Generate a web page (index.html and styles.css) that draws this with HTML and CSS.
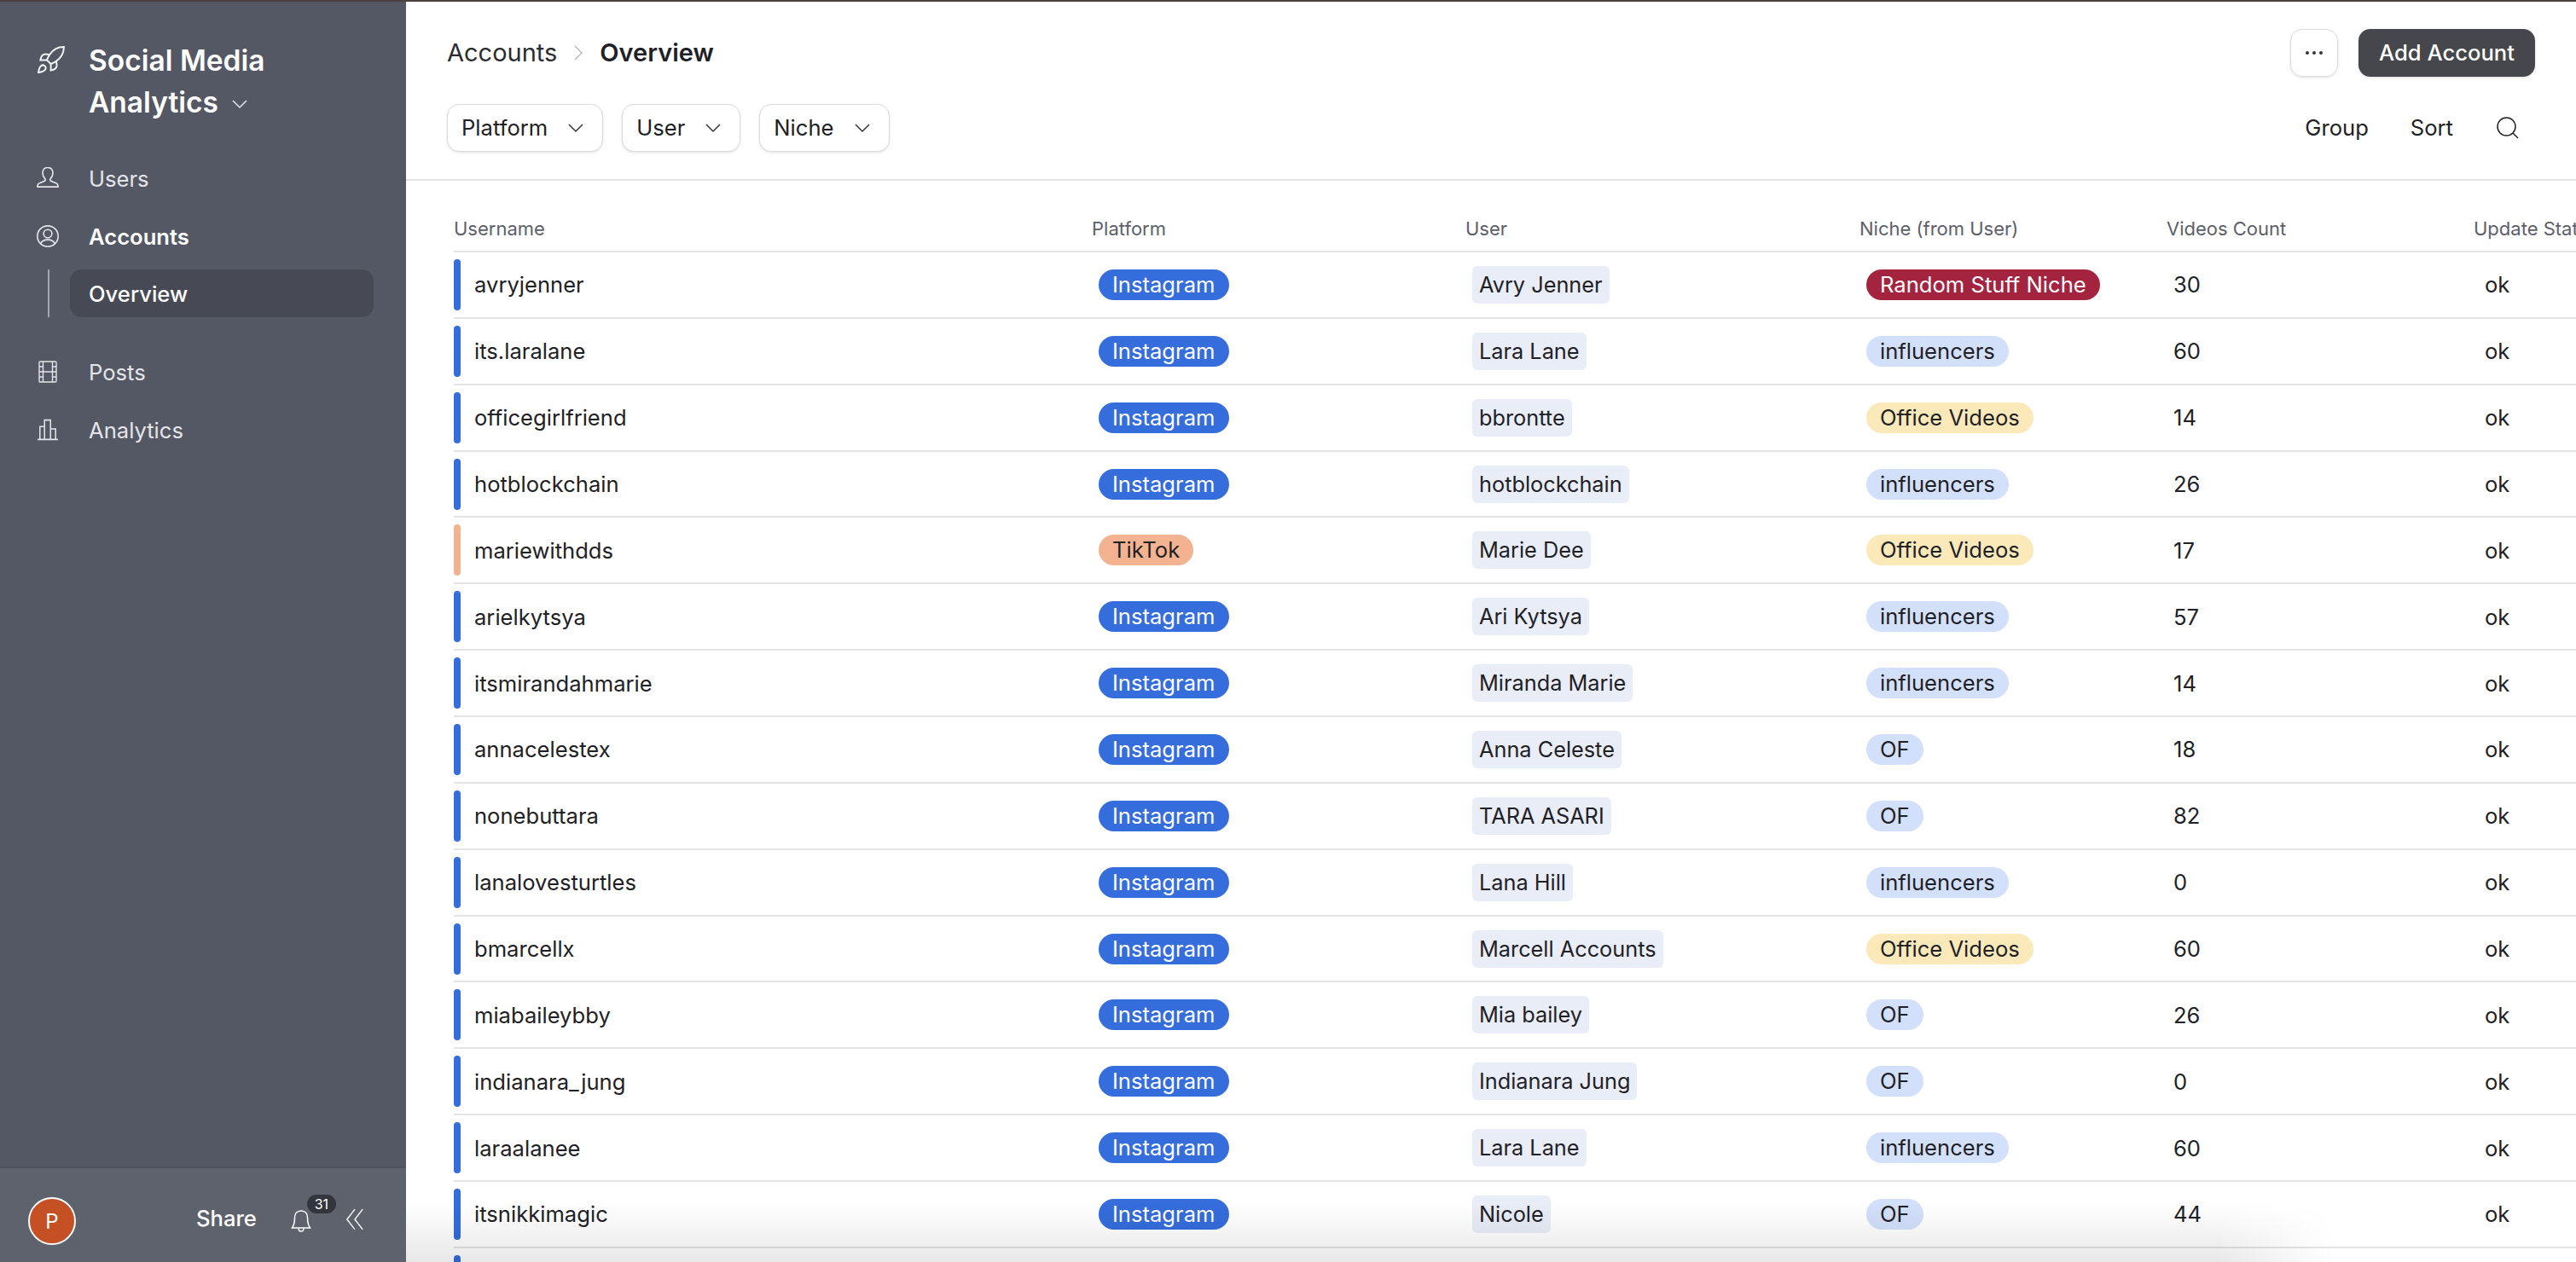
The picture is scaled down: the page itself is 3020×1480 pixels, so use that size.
FILE: index.html
```html
<!doctype html>
<html>
  <head>
    <title>Social Media Analytics - Accounts Overview</title>
    <link rel="stylesheet" href="styles.css">
  </head>
  <body>
    <div class="app">
      <div class="sidebar">
        <div class="brand">
          <svg class="rocket" viewBox="1.800 1.300 20.900 20.900"><path d="M4.500 16.500c-1.500 1.260-2 5-2 5s3.740-.5 5-2c.71-.84.7-2.130-.09-2.910a2.180 2.180 0 0 0-2.910-.09z"/><path d="M12 15l-3-3a22 22 0 0 1 2-3.950A12.880 12.880 0 0 1 22 2c0 2.720-.78 7.500-6 11a22.350 22.350 0 0 1-4 2z"/><path d="M9 12H4s.55-3.030 2-4c1.620-1.080 5 0 5 0"/><path d="M12 15v5s3.030-.55 4-2c1.080-1.620 0-5 0-5"/></svg>
          <div class="brand-name">Social Media<br>Analytics<svg class="brand-caret" viewBox="0 0 18 12"><path d="M1 2l8 8 8-8"/></svg></div>
        </div>
        <div class="nav">
          <div class="nav-item">
            <svg class="nav-icon" viewBox="1.170 1.170 21.670 21.670"><path d="M12 1.500c-3.200 0-5 2.400-5 5.400 0 2.400 1 4.200 2.200 5.400.5.500.5 1.600 0 2.300-.6.800-6.200 1.900-6.800 3.400-.3.800-.4 1.700-.4 2.500h20c0-.8-.1-1.700-.4-2.500-.6-1.500-6.200-2.600-6.800-3.400-.5-.7-.5-1.800 0-2.300 1.200-1.200 2.200-3 2.200-5.400 0-3-1.800-5.400-5-5.400z"/></svg>
            <span>Users</span>
          </div>
          <div class="nav-item nav-active">
            <svg class="nav-icon" viewBox="0.800 0.800 22.400 22.400"><circle cx="12" cy="12" r="10.500"/><circle cx="12" cy="9.500" r="4.200"/><path d="M4.800 19.500c1.500-3 4-4 7.200-4s5.700 1 7.200 4"/></svg>
            <span>Accounts</span>
          </div>
          <div class="sub-group">
            <div class="sub-line"></div>
            <div class="sub-item">Overview</div>
          </div>
          <div class="nav-item">
            <svg class="nav-icon" viewBox="0 0 26 26"><rect x="3" y="1" width="20" height="24" rx="1"/><path d="M7.500 1v24M18.500 1v24M3 7h4.500M3 13h20M3 19h4.500M18.500 7H23M18.500 19H23"/></svg>
            <span>Posts</span>
          </div>
          <div class="nav-item">
            <svg class="nav-icon" viewBox="0 0 24 24"><path d="M1 22.500h22M3.500 22.500v-14h5v14M8.500 22.500V1.500h6.500v21M15 11h5.500v11.500"/></svg>
            <span>Analytics</span>
          </div>
        </div>
        <div class="side-foot">
          <div class="avatar">P</div>
          <div class="share">Share</div>
          <div class="bell">
            <svg class="bell-icon" viewBox="0 0 24 28"><path d="M12 2c-5 0-7.500 3.500-7.500 8 0 6-1 9-3 12h21c-2-3-3-6-3-12 0-4.500-2.500-8-7.500-8z"/><path d="M9 22.500c0 2 1.300 3.500 3 3.500s3-1.500 3-3.500"/></svg>
            <div class="badge">31</div>
          </div>
          <svg class="collapse" viewBox="0 0 24 30"><path d="M12 2L2 15l10 13M22 2L12 15l10 13"/></svg>
        </div>
      </div>

      <div class="main">
        <div class="head">
          <div class="head-row">
            <div class="crumbs">
              <span>Accounts</span>
              <svg class="crumb-sep" viewBox="0 0 10 18"><path d="M1 1l8 8-8 8"/></svg>
              <span class="crumb-now">Overview</span>
            </div>
            <div class="actions">
              <div class="more-btn"><span class="dot"></span><span class="dot"></span><span class="dot"></span></div>
              <div class="add-btn">Add Account</div>
            </div>
          </div>
          <div class="head-row filter-row">
            <div class="filters">
              <div class="filter">Platform<svg class="caret" viewBox="0 0 18 12"><path d="M1 2l8 8 8-8"/></svg></div>
              <div class="filter">User<svg class="caret" viewBox="0 0 18 12"><path d="M1 2l8 8 8-8"/></svg></div>
              <div class="filter">Niche<svg class="caret" viewBox="0 0 18 12"><path d="M1 2l8 8 8-8"/></svg></div>
            </div>
            <div class="tools">
              <span>Group</span>
              <span>Sort</span>
              <svg class="search" viewBox="0 0 26 26"><circle cx="11.500" cy="11.500" r="10.500"/><path d="M19 19l6 6"/></svg>
            </div>
          </div>
        </div>

        <div class="grid">
          <div class="row row-head">
            <div>Username</div><div>Platform</div><div>User</div><div>Niche (from User)</div><div>Videos Count</div><div>Update Status</div>
          </div>

          <div class="row">
            <div class="name"><i class="bar"></i>avryjenner</div>
            <div class="cell-pill"><span class="pill ig">Instagram</span></div>
            <div class="cell-user"><span class="user">Avry Jenner</span></div>
            <div class="cell-pill"><span class="pill random">Random Stuff Niche</span></div>
            <div class="num">30</div>
            <div class="status">ok</div>
          </div>
          <div class="row">
            <div class="name"><i class="bar"></i>its.laralane</div>
            <div class="cell-pill"><span class="pill ig">Instagram</span></div>
            <div class="cell-user"><span class="user">Lara Lane</span></div>
            <div class="cell-pill"><span class="pill inf">influencers</span></div>
            <div class="num">60</div>
            <div class="status">ok</div>
          </div>
          <div class="row">
            <div class="name"><i class="bar"></i>officegirlfriend</div>
            <div class="cell-pill"><span class="pill ig">Instagram</span></div>
            <div class="cell-user"><span class="user">bbrontte</span></div>
            <div class="cell-pill"><span class="pill office">Office Videos</span></div>
            <div class="num">14</div>
            <div class="status">ok</div>
          </div>
          <div class="row">
            <div class="name"><i class="bar"></i>hotblockchain</div>
            <div class="cell-pill"><span class="pill ig">Instagram</span></div>
            <div class="cell-user"><span class="user">hotblockchain</span></div>
            <div class="cell-pill"><span class="pill inf">influencers</span></div>
            <div class="num">26</div>
            <div class="status">ok</div>
          </div>
          <div class="row">
            <div class="name"><i class="bar bar-tt"></i>mariewithdds</div>
            <div class="cell-pill"><span class="pill tt">TikTok</span></div>
            <div class="cell-user"><span class="user">Marie Dee</span></div>
            <div class="cell-pill"><span class="pill office">Office Videos</span></div>
            <div class="num">17</div>
            <div class="status">ok</div>
          </div>
          <div class="row">
            <div class="name"><i class="bar"></i>arielkytsya</div>
            <div class="cell-pill"><span class="pill ig">Instagram</span></div>
            <div class="cell-user"><span class="user">Ari Kytsya</span></div>
            <div class="cell-pill"><span class="pill inf">influencers</span></div>
            <div class="num">57</div>
            <div class="status">ok</div>
          </div>
          <div class="row">
            <div class="name"><i class="bar"></i>itsmirandahmarie</div>
            <div class="cell-pill"><span class="pill ig">Instagram</span></div>
            <div class="cell-user"><span class="user">Miranda Marie</span></div>
            <div class="cell-pill"><span class="pill inf">influencers</span></div>
            <div class="num">14</div>
            <div class="status">ok</div>
          </div>
          <div class="row">
            <div class="name"><i class="bar"></i>annacelestex</div>
            <div class="cell-pill"><span class="pill ig">Instagram</span></div>
            <div class="cell-user"><span class="user">Anna Celeste</span></div>
            <div class="cell-pill"><span class="pill inf">OF</span></div>
            <div class="num">18</div>
            <div class="status">ok</div>
          </div>
          <div class="row">
            <div class="name"><i class="bar"></i>nonebuttara</div>
            <div class="cell-pill"><span class="pill ig">Instagram</span></div>
            <div class="cell-user"><span class="user">TARA ASARI</span></div>
            <div class="cell-pill"><span class="pill inf">OF</span></div>
            <div class="num">82</div>
            <div class="status">ok</div>
          </div>
          <div class="row">
            <div class="name"><i class="bar"></i>lanalovesturtles</div>
            <div class="cell-pill"><span class="pill ig">Instagram</span></div>
            <div class="cell-user"><span class="user">Lana Hill</span></div>
            <div class="cell-pill"><span class="pill inf">influencers</span></div>
            <div class="num">0</div>
            <div class="status">ok</div>
          </div>
          <div class="row">
            <div class="name"><i class="bar"></i>bmarcellx</div>
            <div class="cell-pill"><span class="pill ig">Instagram</span></div>
            <div class="cell-user"><span class="user">Marcell Accounts</span></div>
            <div class="cell-pill"><span class="pill office">Office Videos</span></div>
            <div class="num">60</div>
            <div class="status">ok</div>
          </div>
          <div class="row">
            <div class="name"><i class="bar"></i>miabaileybby</div>
            <div class="cell-pill"><span class="pill ig">Instagram</span></div>
            <div class="cell-user"><span class="user">Mia bailey</span></div>
            <div class="cell-pill"><span class="pill inf">OF</span></div>
            <div class="num">26</div>
            <div class="status">ok</div>
          </div>
          <div class="row">
            <div class="name"><i class="bar"></i>indianara_jung</div>
            <div class="cell-pill"><span class="pill ig">Instagram</span></div>
            <div class="cell-user"><span class="user">Indianara Jung</span></div>
            <div class="cell-pill"><span class="pill inf">OF</span></div>
            <div class="num">0</div>
            <div class="status">ok</div>
          </div>
          <div class="row">
            <div class="name"><i class="bar"></i>laraalanee</div>
            <div class="cell-pill"><span class="pill ig">Instagram</span></div>
            <div class="cell-user"><span class="user">Lara Lane</span></div>
            <div class="cell-pill"><span class="pill inf">influencers</span></div>
            <div class="num">60</div>
            <div class="status">ok</div>
          </div>
          <div class="row">
            <div class="name"><i class="bar"></i>itsnikkimagic</div>
            <div class="cell-pill"><span class="pill ig">Instagram</span></div>
            <div class="cell-user"><span class="user">Nicole</span></div>
            <div class="cell-pill"><span class="pill inf">OF</span></div>
            <div class="num">44</div>
            <div class="status">ok</div>
          </div>
          <div class="row">
            <div class="name"><i class="bar"></i></div>
          </div>
        </div>
        <div class="fade"></div>
      </div>
    </div>
  </body>
</html>
```

FILE: styles.css
```css
html, body {margin: 0; height: 100%; overflow: hidden;}
body {font-family: Inter, "Noto Sans", sans-serif; font-size: 25.6px; color: #1f2126; background: #ffffff;}

.app {display: flex; height: 1478px; border-top: 2px solid #4a4140;}

/* sidebar */
.sidebar {width: 476px; flex: none; display: flex; flex-direction: column; background: #545864; color: #ffffff;}
.brand {display: flex; align-items: flex-start; gap: 28px; padding: 45px 0 0 44px; height: 128px;}
.rocket {width: 32px; height: 32px; flex: none; margin-top: 7px; fill: none; stroke: #f2f3f5; stroke-width: 1.300;}
.brand-name {font-size: 33.500px; line-height: 49px; font-weight: 600;}
.brand-caret {width: 18px; height: 12px; margin-left: 16px; vertical-align: 4px; fill: none; stroke: #e6e7ea; stroke-width: 1.500;}

.nav {display: flex; flex-direction: column; flex: 1;}
.nav-item {display: flex; align-items: center; gap: 35px; height: 68px; padding-left: 43px; color: #e4e5e9; font-weight: 400;}
.nav-active {color: #ffffff; font-weight: 600;}
.nav-icon {width: 26px; height: 26px; flex: none; fill: none; stroke: #e4e5e9; stroke-width: 1.400;}
.sub-group {display: flex; gap: 24px; height: 56px; padding: 0 38px 0 56px; margin: 5px 0 30px;}
.sub-line {width: 2px; background: #a3a6ad;}
.sub-item {flex: 1; display: flex; align-items: center; padding-left: 22px; background: #474a54; border-radius: 14px; font-weight: 500;}

.side-foot {display: flex; align-items: center; height: 112px; padding-left: 33px; background: #5e626d; border-top: 2px solid #50535e; box-sizing: border-box; flex: none;}
.avatar {width: 56px; height: 56px; box-sizing: border-box; border: 2px solid #ffffff; border-radius: 50%; background: #c45023; display: flex; align-items: center; justify-content: center; font-size: 24px; margin-top: 14px;}
.share {margin: 6px 0 0 141px; font-weight: 500;}
.bell {position: relative; margin: 14px 0 0 40px; height: 28px;}
.bell-icon {display: block; width: 24px; height: 28px; fill: none; stroke: #ffffff; stroke-width: 1.500;}
.badge {position: absolute; left: 19px; top: -17px; width: 34px; height: 22px; border-radius: 11px; background: #33353c; font-size: 16px; line-height: 22px; text-align: center;}
.collapse {width: 22px; height: 28px; margin: 10px 0 0 40px; fill: none; stroke: #ffffff; stroke-width: 1.500;}

/* main */
.main {flex: 1; min-width: 0; position: relative; overflow: hidden;}
.head {height: 177px; padding: 31px 48px 0 48px; border-bottom: 2px solid #e4e4e4;}
.head-row {display: flex; align-items: center; justify-content: space-between; height: 57px;}
.filter-row {margin-top: 31px;}
.crumbs {display: flex; align-items: center; font-size: 29px; color: #2a2c31;}
.crumb-sep {width: 10px; height: 18px; margin: 0 20px; fill: none; stroke: #b5b7bb; stroke-width: 1.300;}
.crumb-now {font-weight: 600; color: #1f2126;}
.actions {display: flex; align-items: center; gap: 24px;}
.more-btn {width: 56px; height: 56px; box-sizing: border-box; display: flex; align-items: center; justify-content: center; gap: 4px; border: 1px solid #dcdcde; border-radius: 14px; box-shadow: 0 1px 3px rgba(0, 0, 0, 0.12);}
.dot {width: 4px; height: 4px; border-radius: 50%; background: #33353a;}
.add-btn {width: 207px; height: 56px; display: flex; align-items: center; justify-content: center; background: #46474c; border-radius: 14px; color: #ffffff; font-weight: 500; box-shadow: 0 1px 3px rgba(0, 0, 0, 0.15);}

.filters {display: flex; gap: 22px;}
.filter {display: flex; align-items: center; height: 56px; box-sizing: border-box; padding: 0 22px 0 16px; gap: 24px; background: #ffffff; border: 1px solid #dcdcde; border-radius: 14px; box-shadow: 0 1px 3px rgba(0, 0, 0, 0.12);}
.caret {width: 18px; height: 12px; fill: none; stroke: #33353a; stroke-width: 1.500;}
.tools {display: flex; align-items: center; gap: 49px; padding-right: 19px;}
.search {width: 26px; height: 26px; margin-left: 2px; fill: none; stroke: #1f2126; stroke-width: 1.500;}

/* table */
.grid {margin-left: 56px; width: 2700px;}
.row {display: grid; grid-template-columns: 748px 438px 462px 360px 360px 332px; align-items: center; height: 77.870px; box-sizing: border-box; border-bottom: 2px solid #e4e4e4;}
.row-head {height: 84px; align-items: end; padding-bottom: 13px; font-size: 22px; color: #5d606a;}
.name {display: flex; align-items: center; gap: 16px;}
.bar {width: 8px; height: 60px; border-radius: 4px; background: #356ddc;}
.bar-tt {background: #f3b391;}
.cell-pill {padding-left: 8px;}
.cell-user {padding-left: 8px;}
.pill {display: inline-block; height: 36px; line-height: 36px; padding: 0 16px; border-radius: 18px; white-space: nowrap;}
.ig {background: #356ddc; color: #ffffff;}
.tt {background: #f3b391;}
.random {background: #a4243f; color: #ffffff;}
.inf {background: #d3e0fb;}
.office {background: #fbe9b9;}
.user {display: inline-block; height: 44px; line-height: 44px; padding: 0 8px; font-size: 25.300px; background: #e9edf8; border-radius: 6px; white-space: nowrap;}
.num {padding-left: 8px;}
.status {padding-left: 13px;}

.fade {position: absolute; left: 0; bottom: 0; width: 2260px; height: 70px; background: linear-gradient(to bottom, rgba(0, 0, 0, 0), rgba(0, 0, 0, 0.09)); -webkit-mask-image: linear-gradient(to right, #000 94%, transparent);}
```
